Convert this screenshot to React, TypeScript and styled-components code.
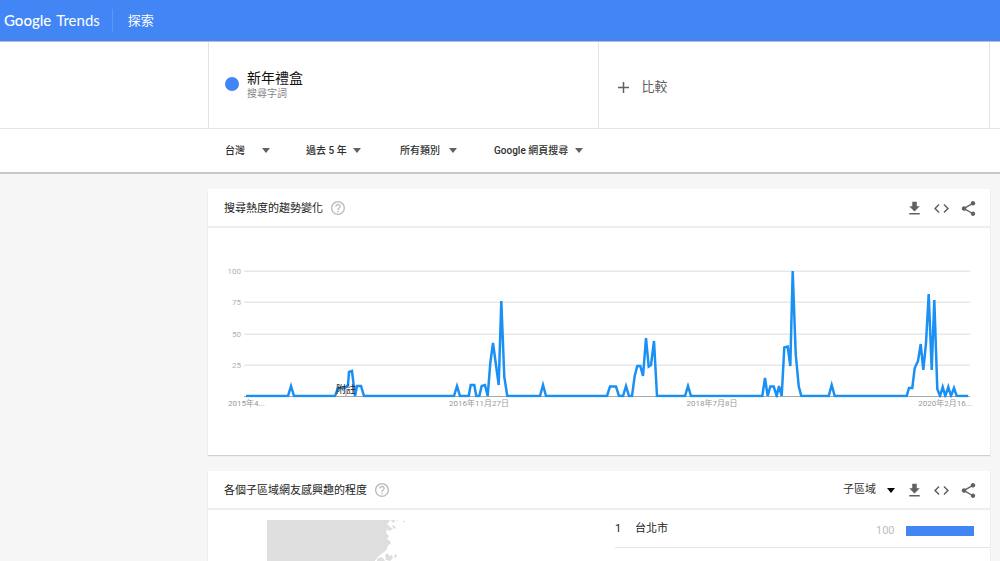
import React from "react";
import styled, { createGlobalStyle } from "styled-components";

const sans = `Roboto, "Noto Sans CJK TC", sans-serif`;

const GlobalStyle = createGlobalStyle`
  *, *::before, *::after { box-sizing: border-box; }
  html { scrollbar-width: none; }
  html, body { margin: 0; background: #f6f6f6; }
  body { font-family: ${sans}; font-size: 11px; line-height: 16px; color: #212121; }
  h1, h2, p { margin: 0; padding: 0; font-weight: 400; }
`;

const Header = styled.header`
  display: flex;
  align-items: center;
  height: 42px;
  padding-left: 4px;
  color: #fff;
  background: #4285f4;
  border-bottom: 1px solid #bdbcc4;
`;

const Logo = styled.a`
  display: flex;
  gap: 5px;
  padding-right: 12px;
  font-family: Lato, sans-serif;
  font-size: 15px;
  line-height: 23px;
  color: #fff;
  text-decoration: none;
  border-right: 1px solid #5e97f6;
`;

const LogoStrong = styled.span`
  font-weight: 500;
`;

const PageName = styled.h1`
  padding-left: 15px;
  font-size: 13px;
  line-height: 20px;
`;

const TopPanel = styled.div`
  background: #fff;
  border-bottom: 2px solid #c8c8c8;
`;

const Terms = styled.section`
  display: grid;
  grid-template-columns: 390fr 391fr;
  height: 86px;
  margin: 0 10px 0 208px;
  border-left: 1px solid #e4e4e4;
  border-right: 1px solid #e4e4e4;
`;

const Term = styled.div`
  display: flex;
  align-items: center;
  gap: 8px;
  padding: 0 0 2px 16px;
  border-right: 1px solid #e4e4e4;
`;

const Dot = styled.span`
  width: 14px;
  height: 14px;
  border-radius: 50%;
  background: #4285f4;
`;

const TermName = styled.h2`
  padding-top: 2px;
  font-size: 14px;
  line-height: 18px;
  color: #111;
`;

const TermKind = styled.p`
  font-size: 10px;
  line-height: 14px;
  color: #868686;
`;

const CompareButton = styled.button`
  display: flex;
  align-items: center;
  gap: 13px;
  padding: 4px 0 0 19px;
  border: 0;
  background: none;
  font: 13px/20px ${sans};
  color: #616161;
`;

const Filters = styled.form`
  display: flex;
  align-items: center;
  height: 44px;
  padding-left: 225px;
  border-top: 1px solid #e4e4e4;
`;

const Picker = styled.label<{ $gap: number; $after: number }>`
  display: flex;
  align-items: center;
  gap: ${(p) => p.$gap}px;
  margin-right: ${(p) => p.$after}px;
`;

const Select = styled.select<{ $size: number; $weight: number }>`
  appearance: none;
  margin: 0;
  padding: 0;
  border: 0;
  background: none;
  font: ${(p) => p.$weight} ${(p) => p.$size}px/16px ${sans};
  color: #303030;
`;

const Main = styled.main`
  display: flex;
  flex-direction: column;
  gap: 16px;
  padding: 15px 10px 16px 208px;
`;

const Card = styled.section`
  background: #fff;
  box-shadow: 0 1px 1px #d0d0d0;
`;

const CardHeader = styled.header`
  display: flex;
  align-items: center;
  height: 39px;
  padding: 0 14px 0 16px;
  border-bottom: 2px solid #eee;
`;

const CardTitle = styled.h2`
  padding-top: 2px;
  font-size: 11px;
  line-height: 16px;
`;

const IconButton = styled.button`
  display: flex;
  padding: 0;
  border: 0;
  background: none;
  color: #616161;
`;

const HelpButton = styled(IconButton)`
  margin-left: 8px;
  color: #bdbdbd;
`;

const Actions = styled.div`
  display: flex;
  align-items: center;
  gap: 12px;
  margin-left: auto;
  padding-top: 1px;
`;

const ChartBody = styled.div`
  padding: 33px 13px 43px 18px;
`;

const ChartSvg = styled.svg`
  display: block;
  width: 100%;
  height: auto;
  font-family: ${sans};
  font-size: 8px;
`;

const RegionBody = styled.div`
  display: grid;
  grid-template-columns: 407fr 375fr;
`;

const MapArea = styled.div`
  padding: 10px 0 16px 59px;
`;

const RankTable = styled.table`
  width: 100%;
  height: 38px;
  border-collapse: collapse;
  td { padding: 0; border-bottom: 1px solid #e6e6e6; }
`;

const RankNumber = styled.td`
  width: 20px;
`;

const RankValue = styled.td`
  width: 114px;
`;

const ValueCell = styled.div`
  display: flex;
  align-items: center;
  gap: 11px;
  padding-top: 4px;
  color: #bdbdbd;
`;

const Bar = styled.span`
  width: 68px;
  height: 10px;
  background: #4285f4;
`;

function Arrow({ color = "#616161" }: { color?: string }) {
  return (
    <svg width="8" height="5" viewBox="0 0 8 5" aria-hidden="true">
      <path d="M0 0h8L4 5z" fill={color} />
    </svg>
  );
}

type DropdownProps = {
  label: string;
  value: string;
  gap: number;
  after?: number;
  size?: number;
  weight?: number;
  color?: string;
};

function Dropdown({ label, value, gap, after = 0, size = 10, weight = 500, color }: DropdownProps) {
  return (
    <Picker $gap={gap} $after={after}>
      <Select $size={size} $weight={weight} aria-label={label}>
        <option>{value}</option>
      </Select>
      <Arrow color={color} />
    </Picker>
  );
}

function Help() {
  return (
    <HelpButton aria-label="說明">
      <svg width="14" height="14" viewBox="2 2 20 20" fill="currentColor" aria-hidden="true">
        <path d="M11 18h2v-2h-2v2zm1-16C6.48 2 2 6.48 2 12s4.48 10 10 10 10-4.48 10-10S17.52 2 12 2zm0 18c-4.41 0-8-3.59-8-8s3.59-8 8-8 8 3.59 8 8-3.59 8-8 8zm0-14c-2.21 0-4 1.79-4 4h2c0-1.1.9-2 2-2s2 .9 2 2c0 2-3 1.75-3 5h2c0-2.25 3-2.5 3-5 0-2.21-1.79-4-4-4z" />
      </svg>
    </HelpButton>
  );
}

const icons = {
  download: "M19 9h-4V3H9v6H5l7 7 7-7zM5 18v2h14v-2H5z",
  embed: "M9.4 16.6L4.8 12l4.6-4.6L8 6l-6 6 6 6 1.4-1.4zm5.2 0l4.6-4.6-4.6-4.6L16 6l6 6-6 6-1.4-1.4z",
  share:
    "M18 16.08c-.76 0-1.44.3-1.96.77L8.91 12.7c.05-.23.09-.46.09-.7s-.04-.47-.09-.7l7.05-4.11c.54.5 1.25.81 2.04.81 1.66 0 3-1.34 3-3s-1.34-3-3-3-3 1.34-3 3c0 .24.04.47.09.7L8.04 9.81C7.5 9.31 6.79 9 6 9c-1.66 0-3 1.34-3 3s1.34 3 3 3c.79 0 1.5-.31 2.04-.81l7.12 4.16c-.05.21-.08.43-.08.65 0 1.61 1.31 2.92 2.92 2.92 1.61 0 2.92-1.31 2.92-2.92s-1.31-2.92-2.92-2.92z",
};

function CardActions({ children }: { children?: React.ReactNode }) {
  return (
    <Actions>
      {children}
      <IconButton aria-label="下載">
        <svg width="15" height="16" viewBox="2 1 20 21" fill="currentColor"><path d={icons.download} /></svg>
      </IconButton>
      <IconButton aria-label="嵌入">
        <svg width="15" height="15" viewBox="2 2 20 20" fill="currentColor"><path d={icons.embed} /></svg>
      </IconButton>
      <IconButton aria-label="分享">
        <svg width="15" height="15" viewBox="2.500 2 19 20" fill="currentColor"><path d={icons.share} /></svg>
      </IconButton>
    </Actions>
  );
}

const trend =
  "20,135 62,135 65,125 68,135 109,135 112,127 119,127 122,124 123,111 126,110 129,135 131,125 135,125 138,135 " +
  "228,135 231,125 234,135 242.7,135 244.7,124 248.3,124 250.3,135 253.3,135 255.7,125 259,124 261.7,135 264.3,102 267,82 272.7,124 275.3,40 278.3,116 281.3,135 " +
  "314,135 317,124 320,135 381,135 384,125.5 390,125.5 393,135 397,135 400,125 403,135 406,135 408.7,115 411.3,105 414.3,105 417,115 420,77 422.7,105.5 425,104 428,80 431,135 " +
  "459,135 462,125 465,135 536.3,135 539,117 541.7,135 544.3,125.5 547.7,125.5 550.7,135 553,125 555.7,135 558.3,86.5 561.7,85.5 564.3,105 566.7,10 569.7,93 572.7,125 575.3,135 " +
  "602.7,135 605.7,124 608.7,135 680.7,135 683,127 686.3,127 688.7,107 692,100 694.7,83 697.3,109 700,82 702.7,33 705.7,109 708.3,39 711.3,128 714,135 716.7,126 719.3,135 722.3,126 725,135 728,127 730.7,135 742,135";

function TrendChart() {
  return (
    <ChartSvg viewBox="0 0 751 151" role="img" aria-label="搜尋熱度的趨勢變化">
      <clipPath id="plot">
        <rect x="0" y="0" width="751" height="136.500" />
      </clipPath>
      {[100, 75, 50, 25].map((value, i) => {
        const y = [10, 41, 73, 104][i];
        return (
          <g key={value}>
            <rect x="18" y={y - 0.5} width="726" height="1.5" fill="#e8e8e8" />
            <text x="15" y={y + 3} textAnchor="end" fill="#b0b0b0">{value}</text>
          </g>
        );
      })}
      <path d="M18 135.500H744" stroke="#a8a8a8" />
      <path d="M120 128v7" stroke="#999" />
      <polyline points={trend} fill="none" stroke="#1a90f5" strokeWidth="2.500" clipPath="url(#plot)" />
      <text x="110" y="132" fontSize="10" fill="#222">附註</text>
      <g fill="#999">
        <text x="2" y="145">2015年4...</text>
        <text x="253" y="145" textAnchor="middle">2016年11月27日</text>
        <text x="486" y="145" textAnchor="middle">2018年7月8日</text>
        <text x="746" y="145" textAnchor="end">2020年2月16...</text>
      </g>
    </ChartSvg>
  );
}

function RegionMap() {
  return (
    <svg width="140" height="80" viewBox="0 0 140 80" fill="#dedede" role="img" aria-label="地圖">
      <path d="M0 0H123L122 2 120 4 123 7 126 9 122 11 120 9 119 13 122 16 120 19 123 21 124 24 121 25 120 29 117 32 114 34 111 37 108 40 106 80H0z" />
      <path d="M124 0h4l-1 3-2-1zM129 1l2-1-1 2zM125 5l3 1 1 3-3-1zM136 1h2v1h-2zM118 35l3-2 1 3 3-1 1 3-3 3-4-1zM128 34l2 1-1 3-2-1zM110 39l4-2 3 2 1 2h-8z" />
    </svg>
  );
}

export default function App() {
  return (
    <>
      <GlobalStyle />
      <Header>
        <Logo href="#">
          <LogoStrong>Google</LogoStrong>
          <span>Trends</span>
        </Logo>
        <PageName>探索</PageName>
      </Header>
      <TopPanel>
        <Terms>
          <Term>
            <Dot />
            <div>
              <TermName>新年禮盒</TermName>
              <TermKind>搜尋字詞</TermKind>
            </div>
          </Term>
          <CompareButton>
            <svg width="11" height="11" viewBox="0 0 11 11" aria-hidden="true">
              <path d="M5.500 0v11M0 5.500h11" stroke="currentColor" strokeWidth="1.500" />
            </svg>
            比較
          </CompareButton>
        </Terms>
        <Filters>
          <Dropdown label="地區" value="台灣" gap={17} after={36} />
          <Dropdown label="時間" value="過去 5 年" gap={6} after={39} />
          <Dropdown label="類別" value="所有類別" gap={9} after={37} />
          <Dropdown label="搜尋類型" value="Google 網頁搜尋" gap={6} />
        </Filters>
      </TopPanel>
      <Main>
        <Card>
          <CardHeader>
            <CardTitle>搜尋熱度的趨勢變化</CardTitle>
            <Help />
            <CardActions />
          </CardHeader>
          <ChartBody>
            <TrendChart />
          </ChartBody>
        </Card>
        <Card>
          <CardHeader>
            <CardTitle>各個子區域網友感興趣的程度</CardTitle>
            <Help />
            <CardActions>
              <Dropdown label="地區層級" value="子區域" gap={11} size={11} weight={400} color="#000" />
            </CardActions>
          </CardHeader>
          <RegionBody>
            <MapArea>
              <RegionMap />
            </MapArea>
            <div>
              <RankTable>
                <tbody>
                  <tr>
                    <RankNumber>1</RankNumber>
                    <td>台北市</td>
                    <RankValue>
                      <ValueCell>100<Bar /></ValueCell>
                    </RankValue>
                  </tr>
                </tbody>
              </RankTable>
            </div>
          </RegionBody>
        </Card>
      </Main>
    </>
  );
}
